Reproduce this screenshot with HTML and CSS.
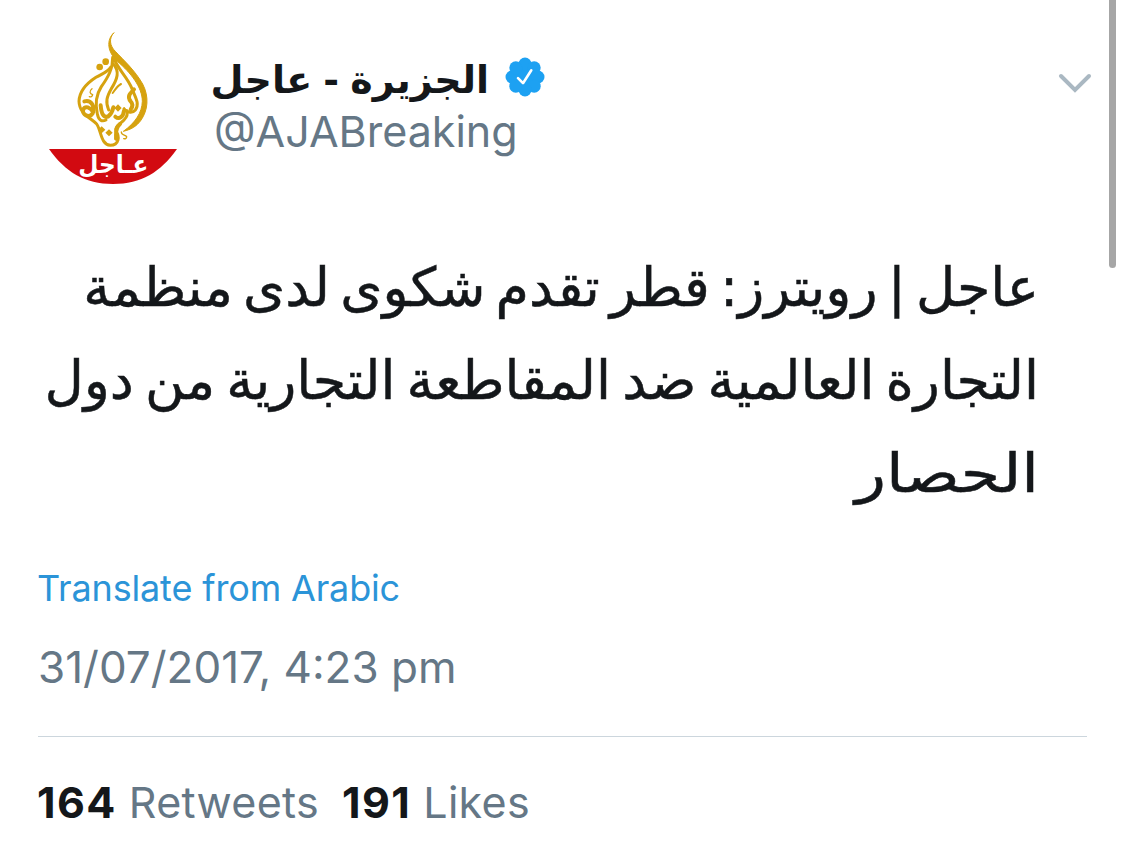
FILE: index.html
```
<!DOCTYPE html>
<html lang="en">
<head>
    <meta charset="UTF-8">
    <meta name="viewport" content="width=device-width, initial-scale=1.0">
    <title>AJABreaking</title>
    <link rel="stylesheet" href="styles.css">
</head>
<body>
    <div class="tweet">
        <div class="header">
            <svg class="avatar" viewBox="27 36 384 456">
                <g class="flame">
                    <path class="tip" d="M222 38C206 54 209 78 226 94C252 122 284 150 308 192C328 230 324 272 302 302C288 320 274 328 250 334C286 308 306 278 307 244C307 202 272 158 232 124C202 96 198 60 222 38Z"/>
                    <path class="s9" d="M212 142C204 156 188 160 168 172C134 194 118 218 117 244C118 282 150 292 170 312C184 332 182 374 211 376C238 376 239 348 228 334C222 322 238 314 252 300C262 290 264 282 260 272"/>
                    <path class="s9" d="M218 112C219 146 204 172 184 200C166 228 166 256 172 282C176 302 186 306 198 300"/>
                    <path class="s9" d="M220 132C240 154 232 178 214 206C200 230 196 246 206 270"/>
                    <path class="s9" d="M222 114C230 144 262 170 276 206C286 232 300 252 286 270C276 282 258 276 252 266"/>
                    <path class="s12" d="M282 208C270 220 260 230 272 244C280 252 278 260 272 268"/>
                    <path class="s12" d="M133 244C154 238 166 260 158 280C148 296 124 284 130 268C136 256 150 262 160 276"/>
                    <path class="s12" d="M182 256C184 280 190 294 204 290C214 282 218 272 220 262M226 290C238 300 250 290 252 272"/>
                    <path class="s12" d="M240 312C222 328 230 344 228 356"/>
                    <path class="s6" d="M243 192C232 198 226 208 218 219"/>
                    <path class="s4" d="M156 206C146 214 150 222 158 224C157 230 152 232 148 230M244 336C244 346 256 344 260 350C260 356 255 357 251 356"/>
                    <circle cx="179" cy="141" r="10"/><circle cx="197" cy="125" r="10"/>
                    <path d="M234 253l11 11-11 11-11-11ZM185 319l11 10-11 11-11-11ZM207 328l11 10-11 11-11-11Z"/>
                </g>
                <path class="banner" d="M27 387H411C361 457 304 492 219 492C134 492 77 457 27 387Z"/>
                <text class="banner-text" x="220" y="459" textLength="210" lengthAdjust="spacingAndGlyphs">عـاجل</text>
            </svg>
            <div class="names">
                <div class="name-row">
                    <span class="name" dir="rtl">الجزيرة - عاجل</span>
                    <svg class="verified" viewBox="0 0 40 40">
                        <g class="badge">
                            <circle cx="20" cy="20" r="15"/>
                            <circle cx="20" cy="7" r="6.5"/><circle cx="29.2" cy="10.8" r="6.5"/>
                            <circle cx="33" cy="20" r="6.5"/><circle cx="29.2" cy="29.2" r="6.5"/>
                            <circle cx="20" cy="33" r="6.5"/><circle cx="10.8" cy="29.2" r="6.5"/>
                            <circle cx="7" cy="20" r="6.5"/><circle cx="10.8" cy="10.8" r="6.5"/>
                        </g>
                        <path class="check" d="M13 21.2L18 26.2L26.3 13.3"/>
                    </svg>
                </div>
                <div class="handle">@AJABreaking</div>
            </div>
            <svg class="chevron" viewBox="0 0 34 20"><path d="M3 3L17 17L31 3"/></svg>
        </div>
        <div class="text" dir="rtl" lang="ar">
            <div class="line line1">عاجل | رويترز: قطر تقدم شكوى لدى منظمة</div>
            <div class="line line2">التجارة العالمية ضد المقاطعة التجارية من دول</div>
            <div class="line line3">الحصار</div>
        </div>
        <a class="translate">Translate from Arabic</a>
        <div class="date">31/07/2017, 4:23 pm</div>
        <div class="stats">
            <div class="stat"><b>164</b> <span class="label">Retweets</span></div>
            <div class="stat"><b>191</b> <span class="label">Likes</span></div>
        </div>
    </div>
    <div class="scrollbar"></div>
</body>
</html>
```
FILE: styles.css
```
body {
    margin: 0;
    height: 856px;
    overflow: hidden;
    background: #fff;
    color: #14171a;
    font-family: Inter, "DejaVu Sans", sans-serif;
}
.tweet {
    width: 1049px;
    padding: 32px 0 0 38px;
}
.header {
    display: flex;
    height: 209px;
}
.avatar {
    width: 128px;
    height: 152px;
    margin: 0 37px 0 11px;
}
.flame {
    fill: #d6a20f;
}
.s4, .s6, .s9, .s12 {
    fill: none;
    stroke: #d6a20f;
    stroke-linecap: round;
    stroke-linejoin: round;
}
.s4 { stroke-width: 4; }
.s6 { stroke-width: 6; }
.s9 { stroke-width: 9; }
.s12 { stroke-width: 12; }
.tip {
    stroke: #d6a20f;
    stroke-width: 3;
}
.banner {
    fill: #d20a11;
}
.banner-text {
    fill: #fff;
    font: bold 74px "DejaVu Sans", sans-serif;
    text-anchor: middle;
}
.names {
    flex: 1;
    padding-top: 21px;
}
.name-row {
    display: flex;
    align-items: center;
    height: 50px;
}
.name {
    width: 275px;
    margin-right: 16px;
    padding-top: 4px;
    font: bold 38px/50px "DejaVu Sans", sans-serif;
    word-spacing: -2px;
    white-space: nowrap;
}
.verified {
    width: 40px;
    height: 40px;
    margin-top: -3px;
}
.badge {
    fill: #1da1f2;
}
.check {
    fill: none;
    stroke: #fff;
    stroke-width: 2.6;
    stroke-linecap: round;
    stroke-linejoin: round;
}
.handle {
    font-size: 43px;
    line-height: 56px;
    color: #657786;
}
.chevron {
    width: 34px;
    height: 20px;
    margin: 41px -5px 0 0;
    fill: none;
    stroke: #aab8c2;
    stroke-width: 4;
    stroke-linecap: round;
}
.text {
    width: 1001px;
    font: 54px/93px "DejaVu Sans", sans-serif;
    -webkit-text-stroke: 0.5px #14171a;
    margin-bottom: 40px;
}
.line {
    height: 93px;
    white-space: nowrap;
}
.line1 {
    word-spacing: -7px;
}
.line2 {
    word-spacing: -6px;
}
.line3 {
    transform: scaleX(1.18);
    transform-origin: right;
}
.translate {
    display: block;
    height: 56px;
    font-size: 36px;
    line-height: 56px;
    color: #2b94d8;
    letter-spacing: -0.15px;
    margin-left: -1px;
}
.date {
    height: 121px;
    padding-top: 23px;
    box-sizing: border-box;
    font-size: 44px;
    line-height: 56px;
    color: #657786;
    border-bottom: 1px solid #ccd6dd;
}
.stats {
    display: flex;
    gap: 23px;
    padding-top: 37px;
    margin-left: -1px;
    font-size: 43px;
    line-height: 56px;
    color: #657786;
}
.stats b {
    font-weight: 700;
    color: #14171a;
    letter-spacing: 1.4px;
}
.label {
    letter-spacing: 0.3px;
}
.scrollbar {
    position: absolute;
    top: -6px;
    right: 9px;
    width: 7px;
    height: 274px;
    border-radius: 4px;
    background: #a6a6a6;
}
```
